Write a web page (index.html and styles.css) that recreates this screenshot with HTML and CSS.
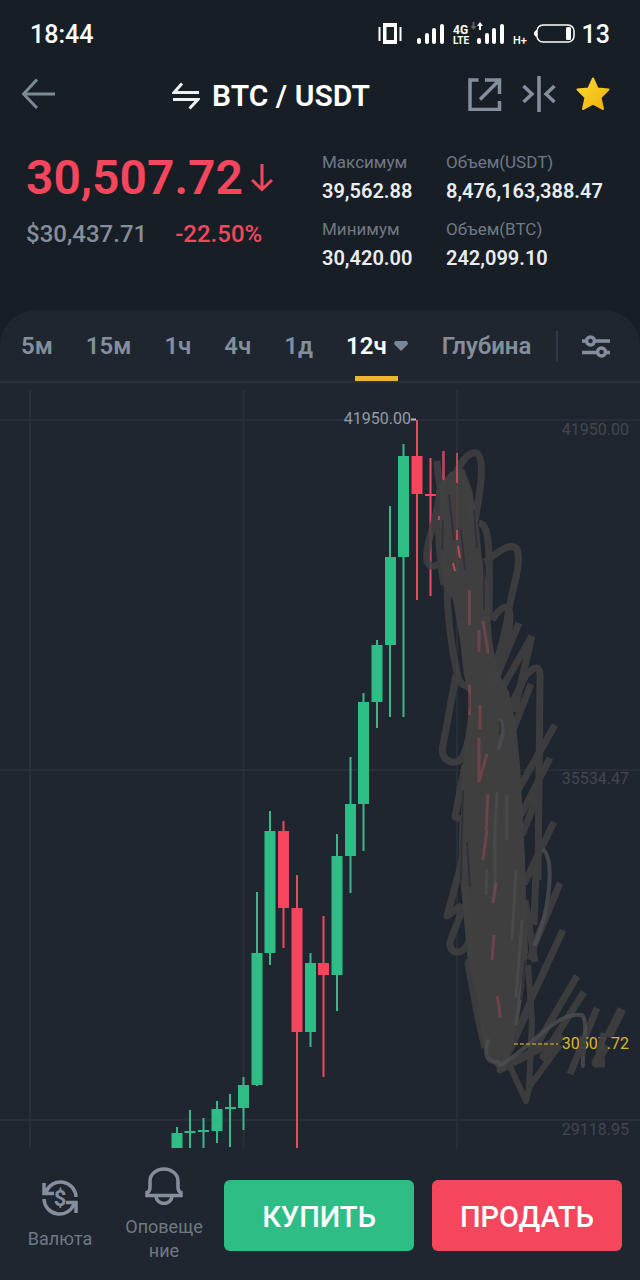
FILE: index.html
```html
<!DOCTYPE html>
<html lang="ru">
<head>
<meta charset="utf-8">
<meta name="viewport" content="width=device-width, initial-scale=1">
<title>BTC / USDT</title>
<link rel="stylesheet" href="styles.css">
</head>
<body>
<div class="app">
  <div class="status">
    <span>18:44</span>
    <div class="status-right">
      <svg class="status-icons" width="200" height="30" viewBox="376 19 200 30" aria-hidden="true">
        <g fill="#fff">
          <path fill-rule="evenodd" d="M383 23h14v21h-14zM386.5 27v13h7.500V27z"/>
          <path d="M378.500 27h2v14h-2zM399.500 27h2v14h-2z"/>
          <rect x="417" y="38" width="4" height="6" rx="2"/><rect x="425" y="33" width="4" height="11" rx="2"/><rect x="432" y="28" width="4" height="16" rx="2"/><rect x="440" y="24" width="4" height="20" rx="2"/>
          <rect x="477" y="38" width="4" height="6" rx="2"/><rect x="485" y="33" width="4" height="11" rx="2"/><rect x="492" y="28" width="4" height="16" rx="2"/><rect x="500" y="24" width="4" height="20" rx="2"/>
          <path d="M480 22l3 4h-2v4h-2v-4h-2z"/>
          <path d="M473.500 30l-3-4h2v-4h2v4h2z" opacity=".3"/>
          <rect x="566" y="27" width="5" height="13" rx="1.500"/>
          <path d="M537 30v7q-3-1-3-3.500t3-3.500z"/>
        </g>
        <rect x="537" y="25" width="37" height="17" rx="6" fill="none" stroke="#fff" stroke-width="1.500"/>
        <text class="net net-top" x="453" y="34">4G</text>
        <text class="net" x="453" y="44">LTE</text>
        <text class="net net-h" x="513" y="44">H+</text>
      </svg>
      <span>13</span>
    </div>
  </div>

  <header class="topbar">
    <button class="icon-btn back" aria-label="Назад">
      <svg width="34" height="34" viewBox="0 0 34 34" fill="none" stroke="#7c8b92" stroke-width="3"><path d="M33 17H2M15 2.500L1.500 17L15 31"/></svg>
    </button>
    <h1 class="pair">
      <svg width="28" height="28" viewBox="0 0 28 28" fill="none" stroke="#eef1f4" stroke-width="3"><path d="M10 1.500L2 10.500h25M1 17.500h25l-8.500 9"/></svg>
      <span>BTC / USDT</span>
    </h1>
    <div class="tools">
      <button class="icon-btn" aria-label="Поделиться">
        <svg width="34" height="34" viewBox="0 0 34 34" fill="none" stroke="#848e9c" stroke-width="3.500"><path d="M10.500 3H2v29.500h29.500V24M17 3h14.500v14M31 3.500L12 22.500"/></svg>
      </button>
      <button class="icon-btn" aria-label="Сравнить">
        <svg width="34" height="36" viewBox="0 0 34 36" fill="none" stroke="#848e9c" stroke-width="3.500"><path d="M17 0v36M1.500 10l8.500 8l-8.500 8M32.500 10L24 18l8.500 8"/></svg>
      </button>
      <button class="icon-btn" aria-label="Избранное">
        <svg width="34" height="34" viewBox="0 0 34 34"><defs><linearGradient id="gold" x2="1" y2="1"><stop stop-color="#fbda35"/><stop offset="1" stop-color="#f2b008"/></linearGradient></defs><path d="M17 1.500l4.500 10 11 1-8 8 2.500 11.500-10-5.500-10 5.500 2.500-11.500-8-8 11-1z" fill="url(#gold)" stroke="url(#gold)" stroke-width="2" stroke-linejoin="round"/></svg>
      </button>
    </div>
  </header>

  <section class="summary">
    <div class="quote">
      <div class="price">30,507.72<svg width="22" height="28" viewBox="0 0 22 28" fill="none" stroke="#f6465d" stroke-width="3"><path d="M11 0v26M1 16l10 9.500L21 16"/></svg></div>
      <div class="sub"><span class="fiat">$30,437.71</span><span class="change">-22.50%</span></div>
    </div>
    <dl class="stats">
      <div><dt>Максимум</dt><dd>39,562.88</dd></div>
      <div><dt>Объем(USDT)</dt><dd>8,476,163,388.47</dd></div>
      <div><dt>Минимум</dt><dd>30,420.00</dd></div>
      <div><dt>Объем(BTC)</dt><dd>242,099.10</dd></div>
    </dl>
  </section>

  <main class="panel">
    <nav class="tabs">
      <div class="periods">
        <button class="tab">5м</button>
        <button class="tab">15м</button>
        <button class="tab">1ч</button>
        <button class="tab">4ч</button>
        <button class="tab">1д</button>
        <button class="tab active">12ч<svg width="16" height="12" viewBox="0 0 16 12"><path d="M2 1h12l1 3-7 7-7-7z" fill="#7c8795"/></svg></button>
        <button class="tab">Глубина</button>
      </div>
      <button class="icon-btn settings" aria-label="Настройки">
        <svg width="28" height="24" viewBox="0 0 28 24" fill="none" stroke="#848e9c" stroke-width="3.500"><path d="M0 7h4.500M12.500 7H28M0 18.500h15.500M23.500 18.500H28"/><circle cx="8.500" cy="7" r="4"/><circle cx="19.500" cy="18" r="4"/></svg>
      </button>
    </nav>

    <svg class="chart" viewBox="0 383 640 767" role="img" aria-label="График BTC / USDT, 12ч">
      <path class="grid" d="M30 390V1148M243.500 390V1148M457 390V1148M0 420H640M0 770H640M0 1120H640"/>
      <g class="axis">
        <text x="629" y="435">41950.00</text>
        <text x="629" y="784">35534.47</text>
        <text x="629" y="1135">29118.95</text>
      </g>
      <g class="up">
        <path class="wick" d="M177 1127V1148M190 1110V1148M203.500 1118V1148M217 1101V1143M230 1094V1147M243.500 1077V1130M257 892V1086M270 811V965M310.500 953V1047M337 834V1011M350.500 757V893M363.500 693V851M377 640V728M390 506V717M403.500 444V717"/>
        <path d="M171.500 1133h11v15h-11zM184.500 1131h11v2h-11zM198 1130h11v2h-11zM211.500 1109h11v22h-11zM225 1107h11v2h-11zM238 1085h11v23h-11zM251.500 953h11v132h-11zM264.500 831h11v122h-11zM305 963h11v69h-11zM331.500 856h11v119h-11zM345 804h11v52h-11zM358 702h11v102h-11zM371.500 645h11v57h-11zM385 557h11v88h-11zM398 456h11v101h-11z"/>
      </g>
      <g class="down">
        <path class="wick" d="M283.500 821V948M297 875V1148M323.500 916V1077M417 420V600M430.500 458V596M443.500 451V530M457 453V572"/>
        <path d="M278 831h11v77h-11zM291.500 908h11v124h-11zM318 963h11v12h-11zM411.500 456h11v38h-11zM425 494h11v2h-11z"/>
      </g>
      <path d="M411 419.500h5" stroke="#b3bac5" stroke-width="2"/>
      <text class="peak" x="411" y="424">41950.00</text>

      <path class="scribble-mass" d="M440 485L450 472L464 469L472 490L479 530L482 560L488 590L492 640L497 670L509 692L516 725L520 765L522 800L525 860L526 900L528 950L522 1000L513 1040L505 1070L500 1072L487 1055L481 1030L478 1000L469 960L463 910L461 820L462 770L468 728L470 700L464 675L460 640L453 600L444 586L440 550z"/>
      <g class="scribble">
        <path d="M437 461C438 485 446 515 451 535L440 490C437 525 425 540 427 561C430 571 441 565 447 555"/>
        <path d="M451 488C458 462 469 451 477 453C486 460 479 500 474 525L463 477"/>
        <path d="M441 480C437 520 438 550 444 585M447 570C446 620 454 660 458 677C461 687 467 685 472 690"/>
        <path d="M479 523C490 525 490 550 489 620M484 563C499 551 510 542 517 549C522 563 513 587 509 608C505 640 497 658 488 690"/>
        <path d="M492 620C501 606 509 602 510 616C510 643 498 662 494 690"/>
        <path d="M456 675L443 745C440 757 448 765 459 761C466 755 470 735 472 710"/>
        <path d="M519 623L494 683M532 636L501 690M532 636L514 712"/>
        <path d="M510 707L526 675C536 664 541 666 540 680L538 880"/>
        <path d="M531 684L513 730M555 725L518 790M550 758L521 815M554 822L524 884M538 795L522 835"/>
        <path d="M465 765L455 817L466 821M463 820L462 861L447 916L462 905M464 905L450 942C449 955 462 956 469 942"/>
        <path d="M536 870L534 925M560 883L534 946L530 960M563 930L533 995L510 1050M525 900L535 962"/>
        <path d="M463 870L471 960L468 963L478 1018L485 1048"/>
        <path d="M577 976L528 1060M584 992L542 1058M597 1008L570 1074M529 1008L500 1070L560 1038L542 1060"/>
        <path stroke-width="6" d="M528 965L532 1020L529 1087L560 1045M508 1062L526 1101L530 1085M500 1067L530 1052"/>
        <path stroke-width="9" d="M622 1009L608 1037M606 1045L596 1063L605 1063"/>
      </g>
      <path class="scribble-light" d="M544 850C556 865 547 918 535 944M500 1065C532 1048 555 1011 582 1015C589 1022 582 1049 583 1066M488 1041C483 1056 488 1063 498 1062M516 1024L522 985M500 720C506 730 501 740 499 748"/>
      <path d="M514 1044H558" stroke="#b7952a" stroke-width="1.500" stroke-dasharray="4 2"/>
      <text class="last" x="629" y="1049">30507.72</text>
      <path class="cover" d="M583 1036L582 1056M604 1033L599 1053"/>
      <path class="streak" d="M443.500 451v28M457 453v30M457 530v10M458 546l2 12M453 563l2 8M439 516v4"/>
      <path class="streak soft" d="M469.500 590v35M469.500 685v30M479 630v22M483 621l2 12l3 20M480 705v24M479 738v44l8-28M486 830l2-36M483 860l4-30M496 883l-3 20M494 935l-2 25M497 996l2 10l1 12"/>
      <path class="shade" d="M443 520l-1 30M449 495l5 45M474 510l3 38M461 530l4 40M484 560v50M499 735q3-8 0-14M463 790l-2 90M467 842l3 45M525 960l-4 40"/>
      <path class="highlight" d="M497 792l-3 55M487 870l-1 25M516 870l-4 70M522 920l-6 78M507 795v45M495 820v70"/>
    </svg>
  </main>

  <footer class="actions">
    <button class="shortcut">
      <svg width="38" height="38" viewBox="0 0 38 38" fill="none" stroke="#848e9c" stroke-width="3.500"><path d="M5 13A15.500 15.500 0 0 1 35 18M33 25A15.500 15.500 0 0 1 3 20M3 4v10.500h10M35 34V23.500H25"/><text class="coin" x="19" y="27">$</text></svg>
      <span>Валюта</span>
    </button>
    <button class="shortcut">
      <svg width="38" height="38" viewBox="0 0 38 38" fill="none" stroke="#848e9c" stroke-width="3.500"><path d="M2 28.500h34v-3q-3-1-3-5V14a14 12 0 0 0-28 0v6.500q0 4-3 5zM11 29a8 7.500 0 0 0 16 0"/></svg>
      <span>Оповеще<br>ние</span>
    </button>
    <div class="trades">
      <button class="trade buy">КУПИТЬ</button>
      <button class="trade sell">ПРОДАТЬ</button>
    </div>
  </footer>
</div>
</body>
</html>
```
FILE: styles.css
```css
* { box-sizing: border-box; }

body {
  margin: 0;
  background: #181e25;
  color: #eaecef;
  font-family: Roboto, "Noto Sans", sans-serif;
}

button {
  border: 0;
  padding: 0;
  background: none;
  color: inherit;
  font: inherit;
  cursor: pointer;
}

svg { display: block; flex: none; }

.app {
  display: flex;
  flex-direction: column;
  min-height: 100vh;
}

.status {
  display: flex;
  justify-content: space-between;
  align-items: center;
  height: 68px;
  padding: 0 30px;
  color: #fff;
  font-size: 25px;
  font-weight: 500;
}

.status-right { display: flex; align-items: center; gap: 6px; }

.net { fill: #fff; font-size: 10px; font-weight: 700; }
.net-top { font-size: 12px; }
.net-h { font-size: 11px; font-weight: 500; }

.topbar {
  display: flex;
  align-items: center;
  height: 52px;
  padding: 0 30px 0 22px;
}

.back { width: 52px; }

.pair {
  display: flex;
  align-items: center;
  gap: 12px;
  margin: 4px auto 0;
  color: #fff;
  font-size: 30px;
  font-weight: 600;
  line-height: 36px;
}

.tools { display: flex; align-items: center; gap: 20px; }

.summary {
  display: flex;
  justify-content: space-between;
  height: 190px;
  padding: 28px 30px 0 26px;
}

.price {
  display: flex;
  align-items: center;
  gap: 8px;
  color: #f6465d;
  font-size: 48px;
  font-weight: 600;
  line-height: 60px;
}

.sub {
  display: flex;
  gap: 28px;
  margin-top: 12px;
  font-size: 24px;
  font-weight: 500;
  line-height: 28px;
}

.fiat { color: #848e9c; }
.change { color: #f6465d; }

.stats {
  display: grid;
  grid-template-columns: 124px 164px;
  align-content: start;
  row-gap: 8px;
  margin: 0;
}

.stats dt { color: #707985; font-size: 17px; line-height: 28px; }

.stats dd {
  margin: 0;
  color: #eaecef;
  font-size: 20px;
  font-weight: 600;
  line-height: 31px;
}

.panel {
  background: #202630;
  border-radius: 36px 36px 0 0;
}

.tabs {
  display: flex;
  justify-content: space-between;
  height: 73px;
  padding: 0 30px 0 21px;
  border-bottom: 2px solid #2b313b;
}

.periods { display: flex; gap: 33px; }

.tab {
  position: relative;
  display: flex;
  align-items: center;
  gap: 6px;
  color: #848e9c;
  font-size: 24px;
  font-weight: 600;
}

.active { color: #fff; }

.active::after {
  content: "";
  position: absolute;
  bottom: 0;
  left: 50%;
  width: 43px;
  height: 5px;
  margin-left: -22px;
  background: #e8b830;
}

.settings {
  display: flex;
  align-items: center;
  align-self: center;
  height: 30px;
  padding-left: 24px;
  border-left: 2px solid #323944;
}

.chart { width: 100%; height: auto; }

.grid { stroke: #292f38; stroke-width: 2; }
.axis text { fill: #42474e; font-size: 16px; text-anchor: end; }
.peak { fill: #929ba8; font-size: 16px; text-anchor: end; }
.last { fill: #d9b72c; font-size: 16px; text-anchor: end; }
.up { fill: #2ebd85; stroke: none; }
.down { fill: #f6465d; stroke: none; }
.wick { fill: none; stroke-width: 2; }
.up .wick { stroke: #3fb58a; }
.down .wick { stroke: #e84b60; }

.scribble-mass { fill: #414141; opacity: 0.96; }

.scribble {
  fill: none;
  stroke: #414141;
  stroke-width: 7;
  stroke-linejoin: round;
  opacity: 0.85;
}

.scribble-light {
  fill: none;
  stroke: #4b4d51;
  stroke-width: 4;
  stroke-linecap: round;
  opacity: 0.8;
}

.cover { stroke: #3e3f40; stroke-width: 7; opacity: 0.95; }
.streak { fill: none; stroke: #b94a58; stroke-width: 2; }
.soft { stroke-width: 3; opacity: 0.4; }
.shade { fill: none; stroke: #2b2e34; stroke-width: 2; opacity: 0.7; }
.highlight { fill: none; stroke: #58595b; stroke-width: 3; opacity: 0.4; }

.actions {
  display: grid;
  grid-template-columns: 104px 104px 1fr;
  flex: 1;
  align-items: center;
  padding: 0 18px 0 8px;
  background: #202630;
}

.shortcut {
  display: flex;
  flex-direction: column;
  align-items: center;
  gap: 10px;
  color: #707985;
  font-size: 18px;
  line-height: 24px;
}

.coin {
  fill: #848e9c;
  stroke: none;
  font-size: 22px;
  font-weight: 700;
  text-anchor: middle;
}

.trades {
  display: grid;
  grid-template-columns: 1fr 1fr;
  gap: 18px;
  padding-left: 8px;
}

.trade {
  height: 71px;
  padding-top: 4px;
  border-radius: 6px;
  color: #fff;
  font-size: 29px;
  font-weight: 500;
}

.buy { background: #2ebd85; }
.sell { background: #f6465d; }
```
